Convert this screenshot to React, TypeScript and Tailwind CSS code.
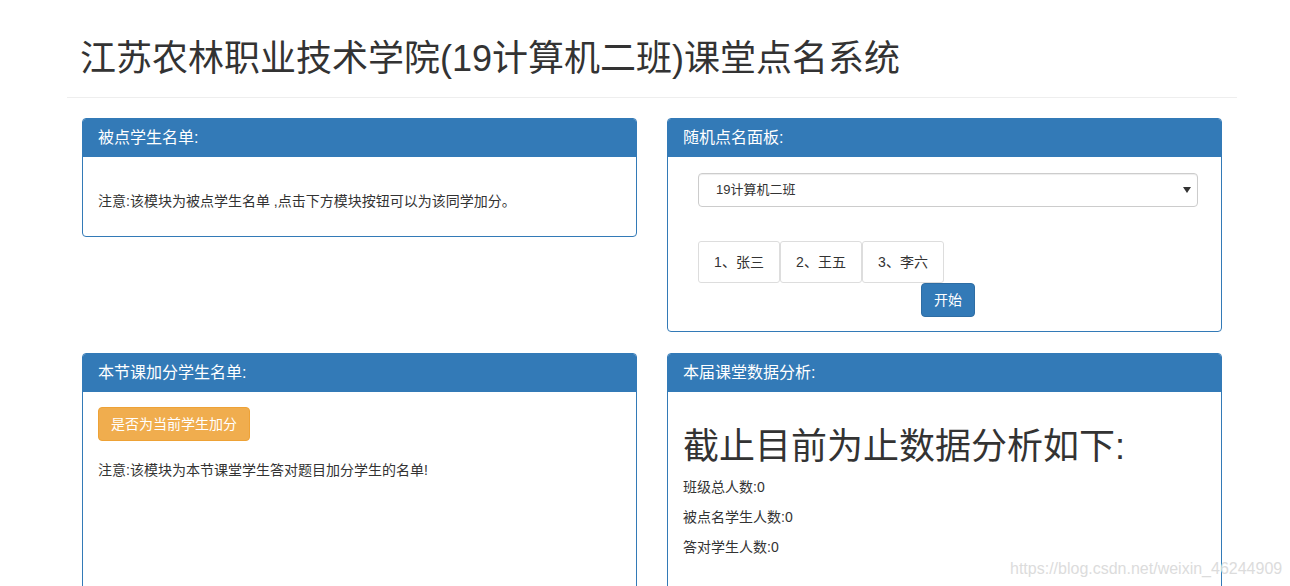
const font = { fontFamily: '"Liberation Sans", "Noto Sans CJK SC", sans-serif' }

const Panel = ({ title, children, className = '' }: { title: string; children: React.ReactNode; className?: string }) => (
  <div className={`border border-[#337ab7] rounded-[4px] bg-white overflow-hidden ${className}`}>
    <div className="h-[38px] bg-[#337ab7] px-[15px] flex items-center text-white text-[16px]">{title}</div>
    {children}
  </div>
)

const names = ['1、张三', '2、王五', '3、李六']

export default function App() {
  return (
    <div className="relative min-h-screen bg-white text-[#333] overflow-hidden" style={font}>
      <div className="w-[1170px] ml-[67px]">
        <div className="mt-[39px] pb-[18px] border-b border-[#eee]">
          <h1 className="px-[13px] text-[36px] leading-[40px] font-normal">
            江苏农林职业技术学院(19计算机二班)课堂点名系统
          </h1>
        </div>

        <div className="grid grid-cols-2 gap-x-[30px] gap-y-[21px] px-[15px] mt-[20px] items-start">
          <Panel title="被点学生名单:">
            <div className="px-[15px] pt-[34px] pb-[25px] text-[14px] leading-[20px]">
              注意:该模块为被点学生名单 ,点击下方模块按钮可以为该同学加分。
            </div>
          </Panel>

          <Panel title="随机点名面板:">
            <div className="pl-[30px] pr-[23px] pt-[16px] pb-[14px]">
              <div className="h-[34px] border border-[#ccc] rounded-[4px] shadow-[inset_0_1px_1px_rgba(0,0,0,0.075)] flex items-center justify-between pl-[17px] pr-[6px] text-[13px]">
                <span>19计算机二班</span>
                <svg width="8" height="6" viewBox="0 0 8 6">
                  <path d="M0 0 L8 0 L4 6 Z" fill="#333" />
                </svg>
              </div>
              <div className="flex mt-[34px]">
                {names.map((n) => (
                  <div key={n} className="w-[82px] h-[42px] border border-[#ddd] rounded-[3px] flex items-center justify-center text-[14px]">
                    {n}
                  </div>
                ))}
              </div>
              <div className="flex justify-center">
                <button className="h-[34px] px-[12px] bg-[#337ab7] border border-[#2e6da4] rounded-[4px] text-white text-[14px]">
                  开始
                </button>
              </div>
            </div>
          </Panel>

          <Panel title="本节课加分学生名单:" className="h-[260px]">
            <div className="p-[15px]">
              <button className="h-[34px] px-[12px] bg-[#f0ad4e] border border-[#eea236] rounded-[4px] text-white text-[14px]">
                是否为当前学生加分
              </button>
              <p className="mt-[19px] text-[14px] leading-[20px]">注意:该模块为本节课堂学生答对题目加分学生的名单!</p>
            </div>
          </Panel>

          <Panel title="本届课堂数据分析:" className="h-[260px]">
            <div className="px-[15px] pt-[35px]">
              <h2 className="text-[36px] leading-[40px] font-normal">截止目前为止数据分析如下:</h2>
              <div className="mt-[10px] flex flex-col gap-[10px] text-[14px] leading-[20px]">
                <p>班级总人数:0</p>
                <p>被点名学生人数:0</p>
                <p>答对学生人数:0</p>
              </div>
            </div>
          </Panel>
        </div>
      </div>

      <div className="absolute left-[1010px] top-[557px] text-[16px] text-[#dcdcdc] whitespace-nowrap">
        https://blog.csdn.net/weixin_46244909
      </div>
    </div>
  )
}
